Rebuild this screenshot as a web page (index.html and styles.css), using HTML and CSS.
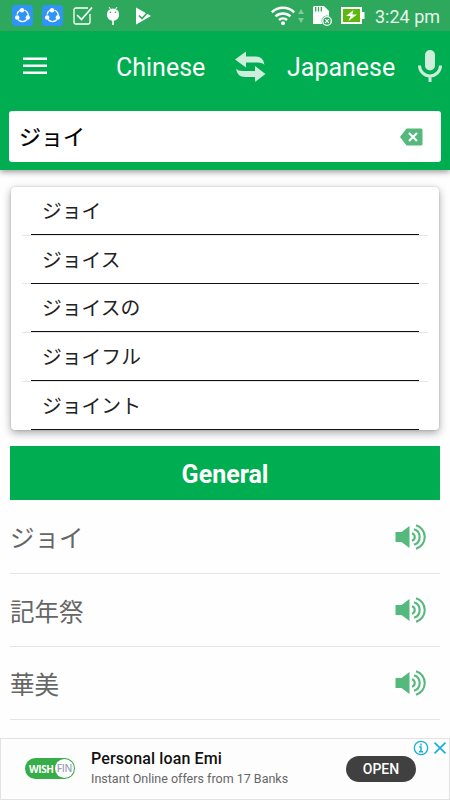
FILE: index.html
```html
<!DOCTYPE html>
<html lang="ja">
<head>
<meta charset="utf-8">
<title>Chinese Japanese Dictionary</title>
<link rel="stylesheet" href="styles.css">
</head>
<body>
<svg class="defs" width="0" height="0">
  <symbol id="share" viewBox="0 0 21 21">
    <rect width="21" height="21" rx="3" fill="#2f94f5"/>
    <path d="M5.200 9.500a5.800 5.800 0 0 1 3-4.500M12.500 5a6.500 6.500 0 0 1 3.800 6M6 14.500a6 6 0 0 0 9 0" fill="none" stroke="#fff" stroke-width="1.300"/>
    <circle cx="10" cy="5.300" r="2.200" fill="#fff"/><circle cx="5.200" cy="12.500" r="2.200" fill="#fff"/><circle cx="15.800" cy="12.500" r="2.200" fill="#fff"/>
  </symbol>
  <symbol id="speaker" viewBox="0 0 30 26">
    <path d="M0 8h6l8-6v22l-8-6H0z" fill="#55b87c"/>
    <path d="M16.500 9.200a4 4 0 0 1 0 7.600M18.500 5.200a8.200 8.200 0 0 1 0 15.600M20.500 1.300a12.200 12.200 0 0 1 0 23.400" fill="none" stroke="#55b87c" stroke-width="2.100"/>
  </symbol>
</svg>
<div class="status">
  <svg class="share" width="21" height="21"><use href="#share"/></svg>
  <svg class="share" width="21" height="21"><use href="#share"/></svg>
  <svg class="check" width="20" height="20" viewBox="0 0 20 20" fill="none" stroke="#fff"><path d="M15 2H3Q1 2 1 4v12q0 2 2 2h12q2 0 2-2V8" stroke-width="1.300"/><path d="M4 9l4.500 4.500L19 1.500" stroke-width="1.700"/></svg>
  <svg class="droid" width="14" height="20" viewBox="0 0 14 20"><path d="M3 1l2 3M11 1L9 4" stroke="#fff"/><path d="M1 8a6 5.500 0 0 1 12 0v1q0 5-6 6-6-1-6-6z" fill="#fff"/><path d="M7 14v5" stroke="#fff" stroke-width="1.600"/><circle cx="4.500" cy="6.300" r=".8" fill="#2ea85d"/><circle cx="9.500" cy="6.300" r=".8" fill="#2ea85d"/></svg>
  <svg class="play" width="17" height="18" viewBox="0 0 17 18"><path d="M1 .5l15 8.500-15 8.500z" fill="#fff"/><path d="M4 8.500l3 3L13 5" fill="none" stroke="#2ea85d" stroke-width="1.700"/></svg>
  <svg class="wifi" width="24" height="20" viewBox="0 0 24 20" fill="none" stroke="#fff" stroke-width="2.500"><path d="M.8 6.400a16 16 0 0 1 22.400 0M4.500 10.400a11 11 0 0 1 15 0M8 14a6 6 0 0 1 8 0"/><circle cx="12" cy="17.300" r="2" fill="#fff" stroke="none"/></svg>
  <svg class="updown" width="6" height="16" viewBox="0 0 6 16" fill="#7fcb9a"><path d="M0 6l3-5 3 5zM0 10h6l-3 5z"/></svg>
  <svg class="sd" width="21" height="22" viewBox="0 0 21 22"><path d="M2 1h10l5 5v13H1V2z" fill="#fff"/><path d="M3.700 2v4.500M6.500 2v4.500M9.300 2v4.500" stroke="#2ea85d" stroke-width="1.300"/><circle cx="15" cy="16" r="5.500" fill="#2ea85d"/><circle cx="15" cy="16" r="4.300" fill="none" stroke="#fff" stroke-width="1.300"/><path d="M13.200 14.200l3.600 3.600M16.800 14.200l-3.600 3.600" stroke="#fff" stroke-width="1.200"/></svg>
  <svg class="battery" width="24" height="18" viewBox="0 0 24 18"><rect x="1" y="1" width="19" height="15" fill="#5db80b" stroke="#fff" stroke-width="2"/><path d="M21 5h2.500v7H21z" fill="#fff"/><path d="M12.500 3L5 9h4.500L7.500 14 16 7.500h-4.700z" fill="#fff"/></svg>
  <span class="time">3:24 pm</span>
</div>
<header class="header">
  <div class="bar">
    <svg class="menu" width="24" height="18" viewBox="0 0 24 18" stroke="#fff" stroke-width="2.500"><path d="M0 1.800h24M0 8.800h24M0 15.800h24"/></svg>
    <span class="lang from">Chinese</span>
    <svg class="swap" width="31" height="32" viewBox="0 0 31 32" fill="#cceedb"><path d="M0 8.500L11 .5v5h10q7.500 0 8.500 8.500-1.500-2.500-7-2.500H11v5zM1 17.500q1.500 2.500 7 2.500h12v-5l10.500 8-10.500 8v-5H10q-8 0-9-8.500z"/></svg>
    <span class="lang to">Japanese</span>
    <svg class="mic" width="24" height="32" viewBox="0 0 24 32"><rect x="7" y="0" width="10" height="20.500" rx="5" fill="#cceedb"/><path d="M1.500 15.500a10.500 10.500 0 0 0 21 0M12 25.500V32" fill="none" stroke="#cceedb" stroke-width="3"/></svg>
  </div>
  <div class="search">
    <span class="query">ジョイ</span>
    <svg width="23" height="18" viewBox="0 0 23 18"><path d="M6.500 .5H21q1.500 0 1.500 1.500v14q0 1.500-1.500 1.500H6.500L0 9z" fill="#55b87c"/><path d="M9 5l8 8M17 5l-8 8" stroke="#fff" stroke-width="2.100"/></svg>
  </div>
</header>
<main>
  <ul class="suggest">
    <li><span>ジョイ</span></li>
    <li><span>ジョイス</span></li>
    <li><span>ジョイスの</span></li>
    <li><span>ジョイフル</span></li>
    <li><span>ジョイント</span></li>
  </ul>
  <h2 class="section">General</h2>
  <div class="row"><span>ジョイ</span><svg width="31" height="26"><use href="#speaker"/></svg></div>
  <div class="row"><span>記年祭</span><svg width="31" height="26"><use href="#speaker"/></svg></div>
  <div class="row"><span>華美</span><svg width="31" height="26"><use href="#speaker"/></svg></div>
</main>
<footer class="ad">
  <div class="logo"><span class="wish">WISH</span><span class="fin">FIN</span></div>
  <div class="copy"><div class="title">Personal loan Emi</div><div class="desc">Instant Online offers from 17 Banks</div></div>
  <div class="open">OPEN</div>
  <svg class="choices" width="34" height="16" viewBox="0 0 34 16" fill="none" stroke="#16b1d3"><circle cx="8" cy="8" r="6.700" stroke-width="1.300"/><path d="M8 3.500v2M6.300 7H8v4.500M6 11.700h4" stroke-width="1.500"/><path d="M21.500 2.700l11 10.600M32.500 2.700l-11 10.600" stroke-width="1.700"/></svg>
</footer>
</body>
</html>
```

FILE: styles.css
```css
* { box-sizing: border-box; }
body {
  margin: 0;
  width: 450px;
  height: 800px;
  overflow: hidden;
  display: flex;
  flex-direction: column;
  background: #fefefe;
  font-family: Roboto, "Noto Sans CJK JP", sans-serif;
}
svg { display: block; flex: none; }
.defs { position: absolute; }
.status {
  position: relative;
  z-index: 1;
  flex: none;
  height: 31px;
  display: flex;
  align-items: center;
  padding-left: 12px;
  background: #2ea85d;
}
.share { margin-right: 9px; }
.check { margin-left: 1px; }
.droid { margin-left: 13px; }
.play { margin-left: 15px; }
.wifi { margin-left: 119px; }
.updown { margin-left: 3px; }
.sd { margin-left: 8px; }
.battery { margin-left: 8px; }
.time { margin-left: 10px; font-size: 18px; line-height: 31px; color: #e8f6ed; white-space: nowrap; padding-top: 1px; }
.header {
  flex: none;
  height: 139px;
  background: #00ad50;
  box-shadow: 0 2px 6px rgba(0, 0, 0, .4);
}
.bar {
  height: 80px;
  display: flex;
  padding-left: 23px;
}
.menu { margin-top: 26px; }
.lang { font-size: 25px; line-height: 30px; margin-top: 22px; color: #fff; white-space: nowrap; }
.from { width: 90px; margin-left: 69px; }
.swap { margin: 20px 0 0 29px; }
.to { width: 108px; margin-left: 21px; }
.mic { margin: 19px 0 0 23px; }
.search {
  height: 51px;
  margin: 0 9px;
  padding: 0 18px 0 10px;
  display: flex;
  align-items: center;
  justify-content: space-between;
  background: #fff;
  border-radius: 3px;
}
.query { font-size: 22px; color: #000; -webkit-text-stroke: .2px #000; line-height: 30px; margin-top: 2px; }
main { flex: none; height: 568px; padding: 17px 10px 0; }
.suggest {
  list-style: none;
  margin: 0 1px;
  padding: 0 11px;
  height: 243px;
  background: #fff;
  border-radius: 4px;
  box-shadow: 0 3px 9px rgba(0, 0, 0, .35), 0 0 2px rgba(0, 0, 0, .2);
}
.suggest li { height: 48.700px; border-bottom: 1px solid #e6e6e6; }
.suggest li:last-child { height: 48.200px; border: 0; }
.suggest span {
  display: block;
  height: 48px;
  margin: 0 9px;
  padding-left: 11px;
  border-bottom: 1px solid #111;
  font-size: 19.800px;
  line-height: 49px;
  color: #222;
}
.section {
  margin: 16px 0 0;
  height: 54px;
  background: #00ad50;
  color: #fff;
  font-size: 25px;
  line-height: 57px;
  font-weight: 700;
  text-align: center;
}
.row {
  height: 73px;
  display: flex;
  align-items: center;
  justify-content: space-between;
  padding-right: 14px;
  border-bottom: 1px solid #e5e5e5;
  font-size: 24.500px;
  color: #666;
}
.row:nth-of-type(1) { height: 74px; }
.ad {
  position: relative;
  flex: none;
  height: 62px;
  display: flex;
  align-items: center;
  padding: 0 0 1px 24px;
  border: 1px solid #e2e2e2;
  background: #fdfdfd;
}
.logo {
  width: 50px;
  height: 21px;
  display: flex;
  align-items: center;
  justify-content: space-between;
  padding: 0 1px 0 4px;
  border-radius: 11px;
  background: #37ad49;
  font-family: "Open Sans", sans-serif;
  font-size: 10px;
}
.wish { color: #fff; font-weight: 700; letter-spacing: -.4px; }
.fin { width: 19px; height: 19px; border-radius: 50%; background: #fff; color: #9da1b5; line-height: 19px; text-align: center; font-weight: 600; letter-spacing: -.3px; }
.copy { margin-left: 16px; width: 240px; white-space: nowrap; }
.title { font-size: 16px; line-height: 20px; color: #111; font-weight: 500; letter-spacing: .12px; }
.desc { font-size: 12.500px; line-height: 19px; color: #666; }
.open {
  margin-left: 15px;
  width: 70px;
  height: 26px;
  border-radius: 13px;
  background: #404040;
  color: #fff;
  font-size: 14px;
  line-height: 26px;
  font-weight: 500;
  text-align: center;
}
.choices { position: absolute; right: 2px; top: 1px; }
```
